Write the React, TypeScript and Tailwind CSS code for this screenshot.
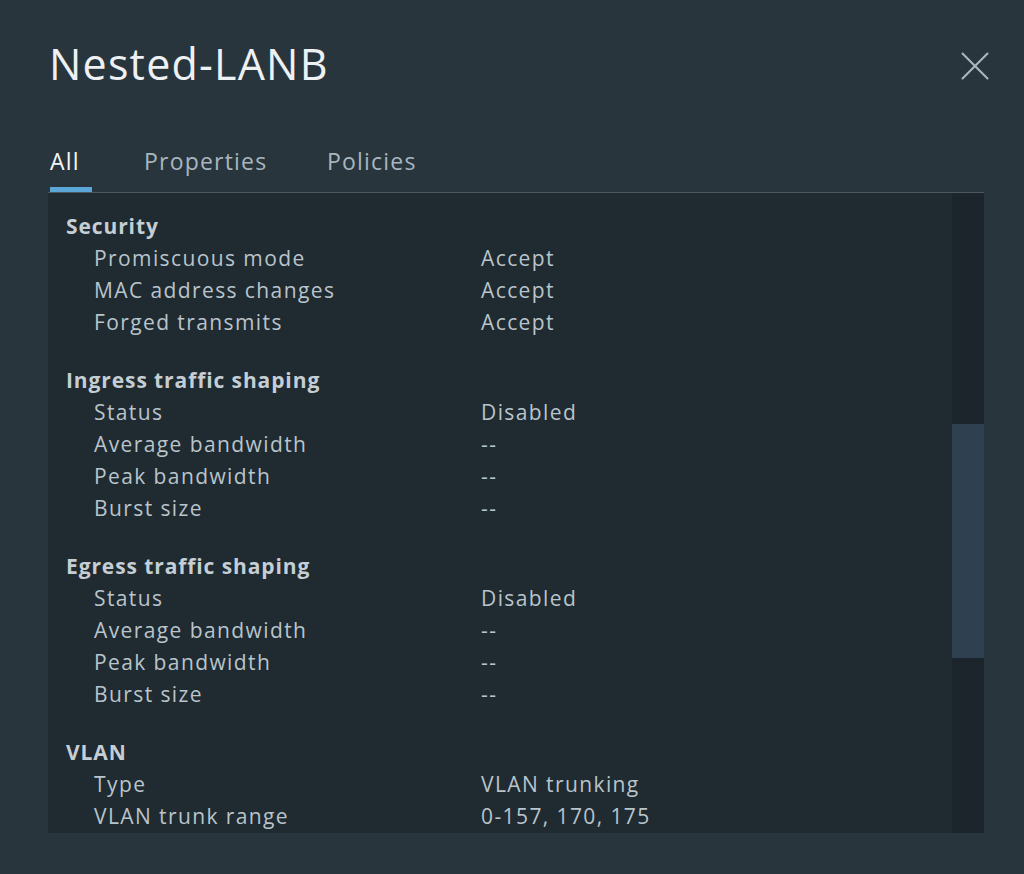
import { X } from 'lucide-react'

type Row = { label: string; value: string }
type Section = { title: string; rows: Row[] }

const SECTIONS: Section[] = [
  {
    title: 'Security',
    rows: [
      { label: 'Promiscuous mode', value: 'Accept' },
      { label: 'MAC address changes', value: 'Accept' },
      { label: 'Forged transmits', value: 'Accept' },
    ],
  },
  {
    title: 'Ingress traffic shaping',
    rows: [
      { label: 'Status', value: 'Disabled' },
      { label: 'Average bandwidth', value: '--' },
      { label: 'Peak bandwidth', value: '--' },
      { label: 'Burst size', value: '--' },
    ],
  },
  {
    title: 'Egress traffic shaping',
    rows: [
      { label: 'Status', value: 'Disabled' },
      { label: 'Average bandwidth', value: '--' },
      { label: 'Peak bandwidth', value: '--' },
      { label: 'Burst size', value: '--' },
    ],
  },
  {
    title: 'VLAN',
    rows: [
      { label: 'Type', value: 'VLAN trunking' },
      { label: 'VLAN trunk range', value: '0-157, 170, 175' },
    ],
  },
]

const TABS = [
  { name: 'All', width: 'w-[94px]', active: true },
  { name: 'Properties', width: 'w-[183px]', active: false },
  { name: 'Policies', width: 'w-[120px]', active: false },
]

export default function App() {
  return (
    <div
      className="w-[1024px] h-[874px] bg-[#28353d] pl-[48px] pr-[40px] flex flex-col overflow-hidden"
      style={{ fontFamily: '"Open Sans", "Liberation Sans", sans-serif' }}
    >
      {/* header */}
      <div className="flex items-start justify-between pt-[38px] h-[128px]">
        <h1 className="pl-[1px] text-[43px] leading-[52px] text-[#eef1f3] font-normal tracking-[1.2px]">
          Nested-LANB
        </h1>
        <button className="mt-[3px] mr-[-16px] text-[#a8b6bf]">
          <X size={50} strokeWidth={1} />
        </button>
      </div>

      {/* tabs */}
      <div className="flex w-[936px] border-b border-[#4b5763] h-[65px]">
        {TABS.map((tab) => (
          <div key={tab.name} className={`${tab.width} pl-[2px] pt-[14px] flex flex-col`}>
            <span
              className={`text-[23px] leading-[38px] tracking-[1.2px] ${
                tab.active ? 'text-[#f5f7f8]' : 'text-[#a9b6bf]'
              }`}
            >
              {tab.name}
            </span>
            {tab.active && <div className="mt-auto h-[5px] w-[42px] bg-[#5aa7d8]" />}
          </div>
        ))}
      </div>

      {/* panel */}
      <div className="flex w-[936px] h-[640px] bg-[#1f2a31]">
        <div className="flex-1 pt-[18px] pl-[18px] text-[#b9c4cb] text-[21px] tracking-[1.4px]">
          {SECTIONS.map((section, i) => (
            <div key={section.title} className={i > 0 ? 'mt-[26px]' : ''}>
              <div className="h-[32px] flex items-center font-bold text-[#c5ced4] tracking-[0.9px]">
                {section.title}
              </div>
              {section.rows.map((row) => (
                <div key={row.label} className="h-[32px] flex items-center pl-[28px]">
                  <span className="w-[387px]">{row.label}</span>
                  <span>{row.value}</span>
                </div>
              ))}
            </div>
          ))}
        </div>
        <div className="w-[32px] bg-[#1d252c] pt-[231px]">
          <div className="h-[234px] bg-[#2f4150]" />
        </div>
      </div>
    </div>
  )
}
